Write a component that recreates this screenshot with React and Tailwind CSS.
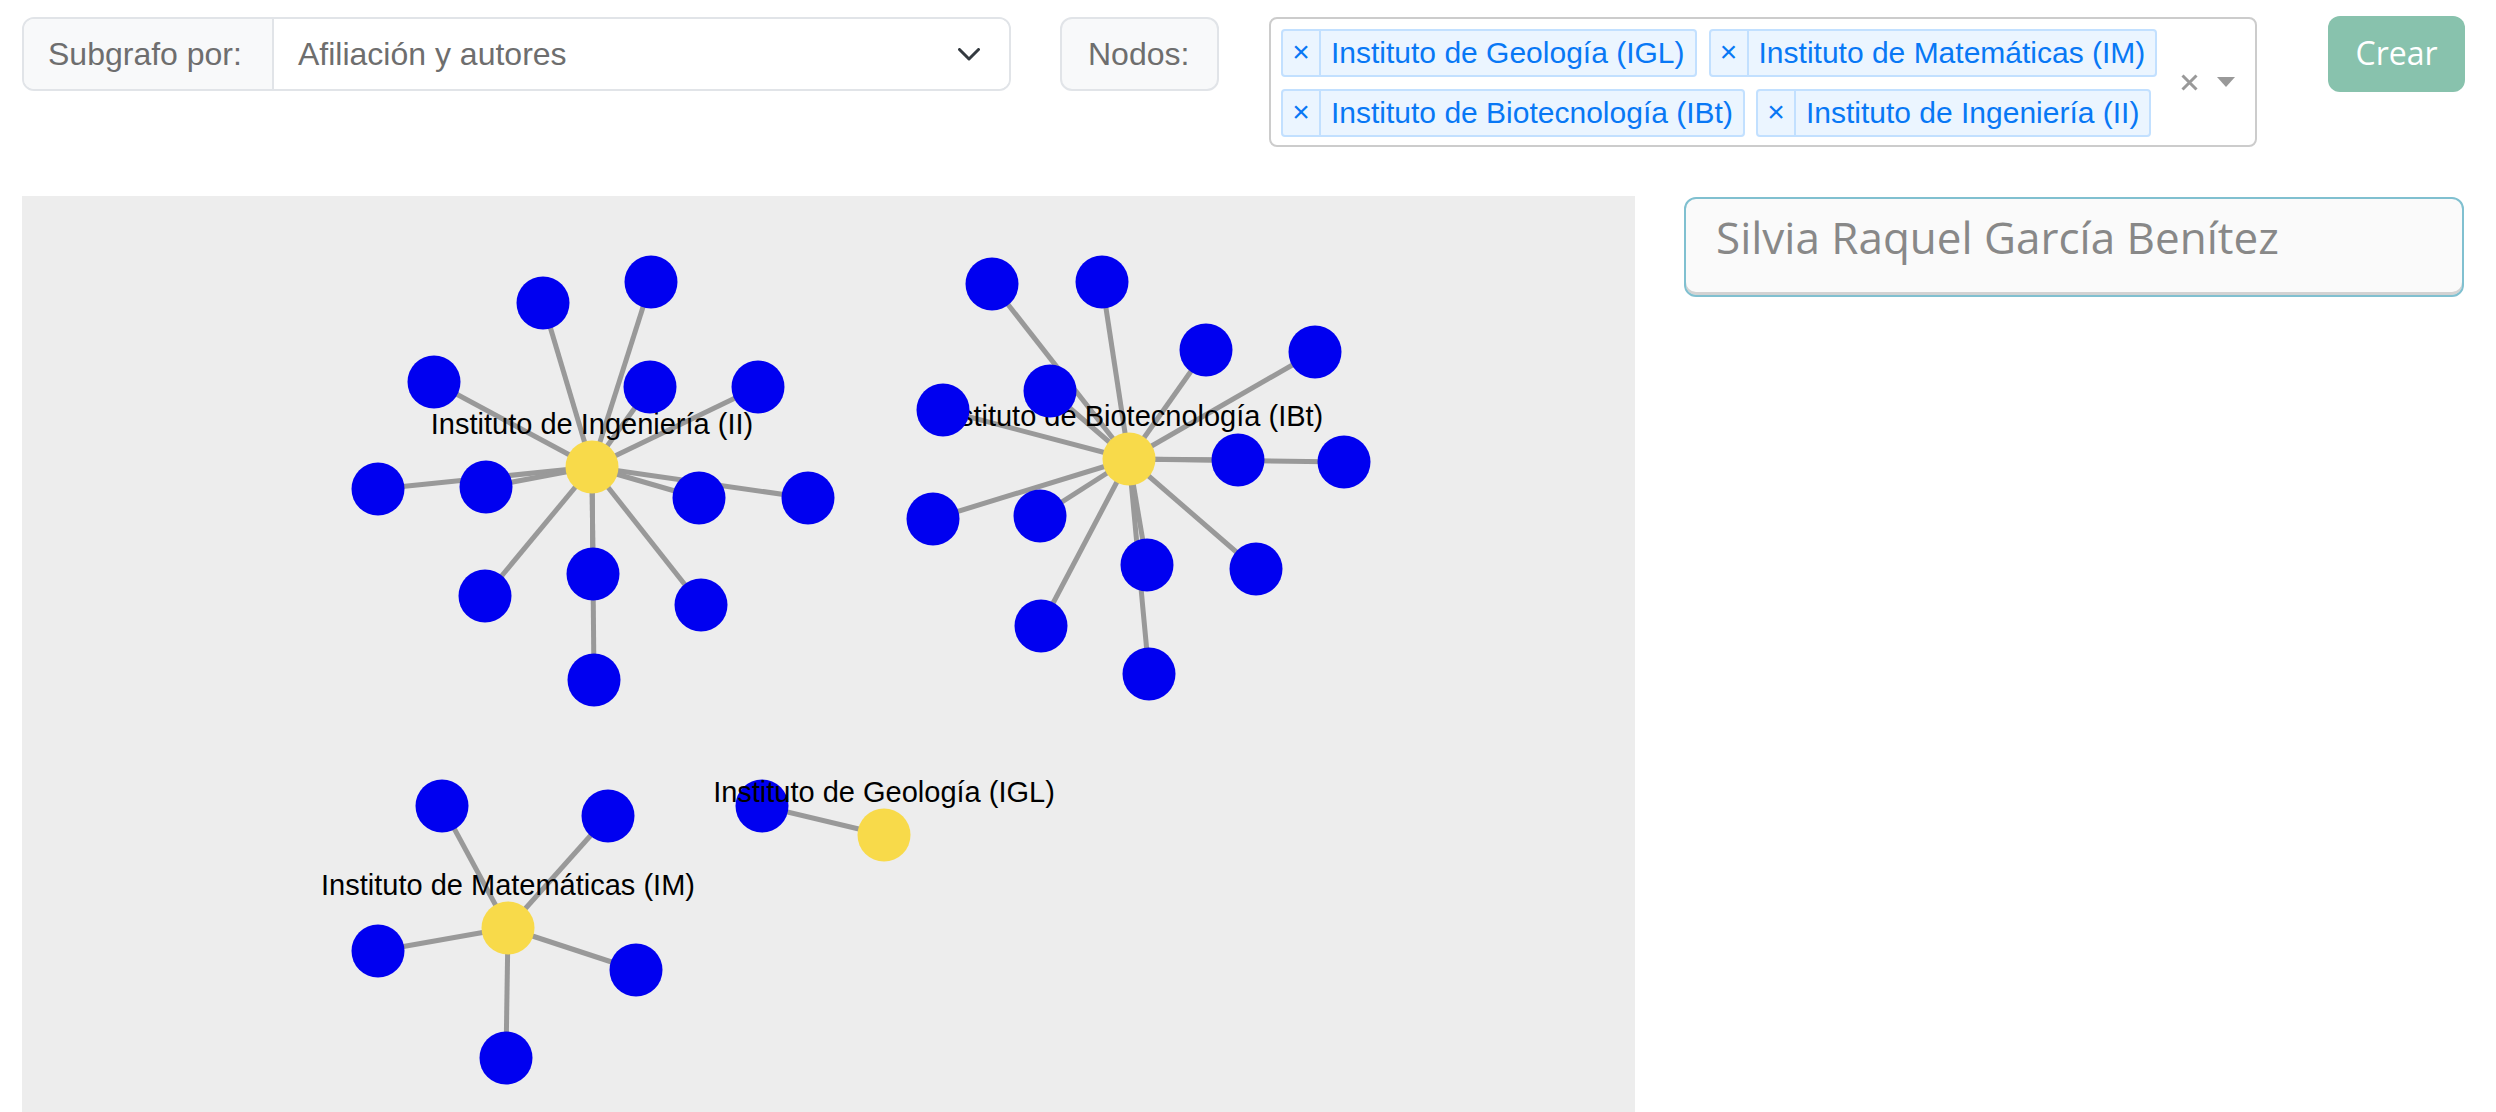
import React from 'react';

// grafo: coordenadas en px de la página (el svg usa el mismo sistema con viewBox)
const clusters = [
  {
    label: 'Instituto de Ingeniería (II)',
    c: [592, 467],
    leaves: [[543, 303], [651, 282], [434, 382], [650, 387], [758, 387], [378, 489], [486, 487], [699, 498], [808, 498], [485, 596], [593, 574], [701, 605], [594, 680]],
    leavesFirst: false,
  },
  {
    label: 'Instituto de Biotecnología (IBt)',
    c: [1129, 459],
    leaves: [[992, 284], [1102, 282], [1206, 350], [1315, 352], [1050, 391], [943, 410], [1238, 460], [1344, 462], [933, 519], [1040, 516], [1147, 565], [1256, 569], [1041, 626], [1149, 674]],
    leavesFirst: false,
  },
  {
    label: 'Instituto de Matemáticas (IM)',
    c: [508, 928],
    leaves: [[442, 806], [608, 816], [378, 951], [636, 970], [506, 1058]],
    leavesFirst: false,
  },
  {
    label: 'Instituto de Geología (IGL)',
    c: [884, 835],
    leaves: [[762, 806]],
    leavesFirst: true,
  },
];

const R = 26.5;

function Cluster({ cl }) {
  const leaves = cl.leaves.map(([x, y], i) => <circle key={'n' + i} cx={x} cy={y} r={R} fill="#0000f0" />);
  const center = (
    <g>
      <circle cx={cl.c[0]} cy={cl.c[1]} r={R} fill="#f8da4a" />
      <text x={cl.c[0]} y={cl.c[1] - 33} textAnchor="middle" fontSize="29" fill="#000">
        {cl.label}
      </text>
    </g>
  );
  return (
    <g>
      {cl.leaves.map(([x, y], i) => (
        <line key={'e' + i} x1={cl.c[0]} y1={cl.c[1]} x2={x} y2={y} stroke="#999999" strokeWidth="5" />
      ))}
      {cl.leavesFirst ? leaves : center}
      {cl.leavesFirst ? center : leaves}
    </g>
  );
}

function Chip({ text }) {
  return (
    <div className="flex h-[48px] rounded-[4px] border-2 border-[#c2e0ff] bg-[#ebf5ff] text-[#0878f5]">
      <span className="flex w-[38px] items-center justify-center border-r-2 border-[#c2e0ff] pb-[3px] text-[30px] leading-none">×</span>
      <span className="flex items-center px-[10px] text-[30px] leading-none">{text}</span>
    </div>
  );
}

export default function App() {
  return (
    <div className="h-[1112px] overflow-hidden bg-white pl-[22px] pt-[17px] font-['Liberation_Sans',Arial,sans-serif]">
      {/* fila superior */}
      <div className="flex items-start">
        <div className="flex h-[74px] w-[989px] overflow-hidden rounded-[12px] border-2 border-[#e1e4e8] text-[32px] text-[#6e6e6e]">
          <div className="flex w-[250px] items-center border-r-2 border-[#e1e4e8] bg-[#f8f9fa] pl-[24px]">Subgrafo por:</div>
          <div className="flex flex-1 items-center justify-between bg-white pl-[24px] pr-[29px]">
            <span>Afiliación y autores</span>
            <svg width="22" height="13" viewBox="0 0 22 13">
              <path d="M1.5 1.5 L11 11 L20.5 1.5" fill="none" stroke="#343a40" strokeWidth="3" strokeLinecap="round" strokeLinejoin="round" />
            </svg>
          </div>
        </div>

        <div className="ml-[49px] flex h-[74px] w-[159px] items-center rounded-[12px] border-2 border-[#e1e4e8] bg-[#f8f9fa] pl-[26px] text-[32px] text-[#6e6e6e]">
          Nodos:
        </div>

        <div className="ml-[50px] flex h-[130px] w-[988px] rounded-[8px] border-2 border-[#cccccc] bg-white">
          <div className="flex flex-1 flex-col gap-y-[12px] pl-[10px] pt-[10px]">
            <div className="flex gap-x-[12px]">
              <Chip text="Instituto de Geología (IGL)" />
              <Chip text="Instituto de Matemáticas (IM)" />
            </div>
            <div className="flex gap-x-[11px]">
              <Chip text="Instituto de Biotecnología (IBt)" />
              <Chip text="Instituto de Ingeniería (II)" />
            </div>
          </div>
          <div className="flex items-center gap-[19px] pr-[20px]">
            <svg width="17" height="17" viewBox="0 0 17 17">
              <path d="M1.5 1.5 L15.5 15.5 M15.5 1.5 L1.5 15.5" stroke="#999" strokeWidth="3" />
            </svg>
            <svg width="18" height="10" viewBox="0 0 18 10">
              <polygon points="0,0 18,0 9,10" fill="#999" />
            </svg>
          </div>
        </div>

        <button className="ml-[71px] mt-[-1px] flex h-[76px] w-[137px] items-center justify-center rounded-[12px] bg-[#88c2ad] pb-[3px] font-['Open_Sans',sans-serif] text-[32px] text-white">
          Crear
        </button>
      </div>

      {/* fila inferior */}
      <div className="mt-[49px] flex items-start">
        <div className="h-[916px] w-[1613px] bg-[#ededed]">
          <svg width="1613" height="916" viewBox="22 196 1613 916" className="block font-['Liberation_Sans',Arial,sans-serif]">
            {clusters.map((cl) => (
              <Cluster key={cl.label} cl={cl} />
            ))}
          </svg>
        </div>

        <div className="ml-[49px] mt-[1px] h-[100px] w-[780px] rounded-[12px] border-2 border-[#80c0d0] bg-[#fafafa] pl-[30px] pt-[12px] font-['Open_Sans',sans-serif] text-[44px] leading-[1.2] text-[#888888] shadow-[inset_0_-3px_0_#d2d2d2]">
          Silvia Raquel García Benítez
        </div>
      </div>
    </div>
  );
}
